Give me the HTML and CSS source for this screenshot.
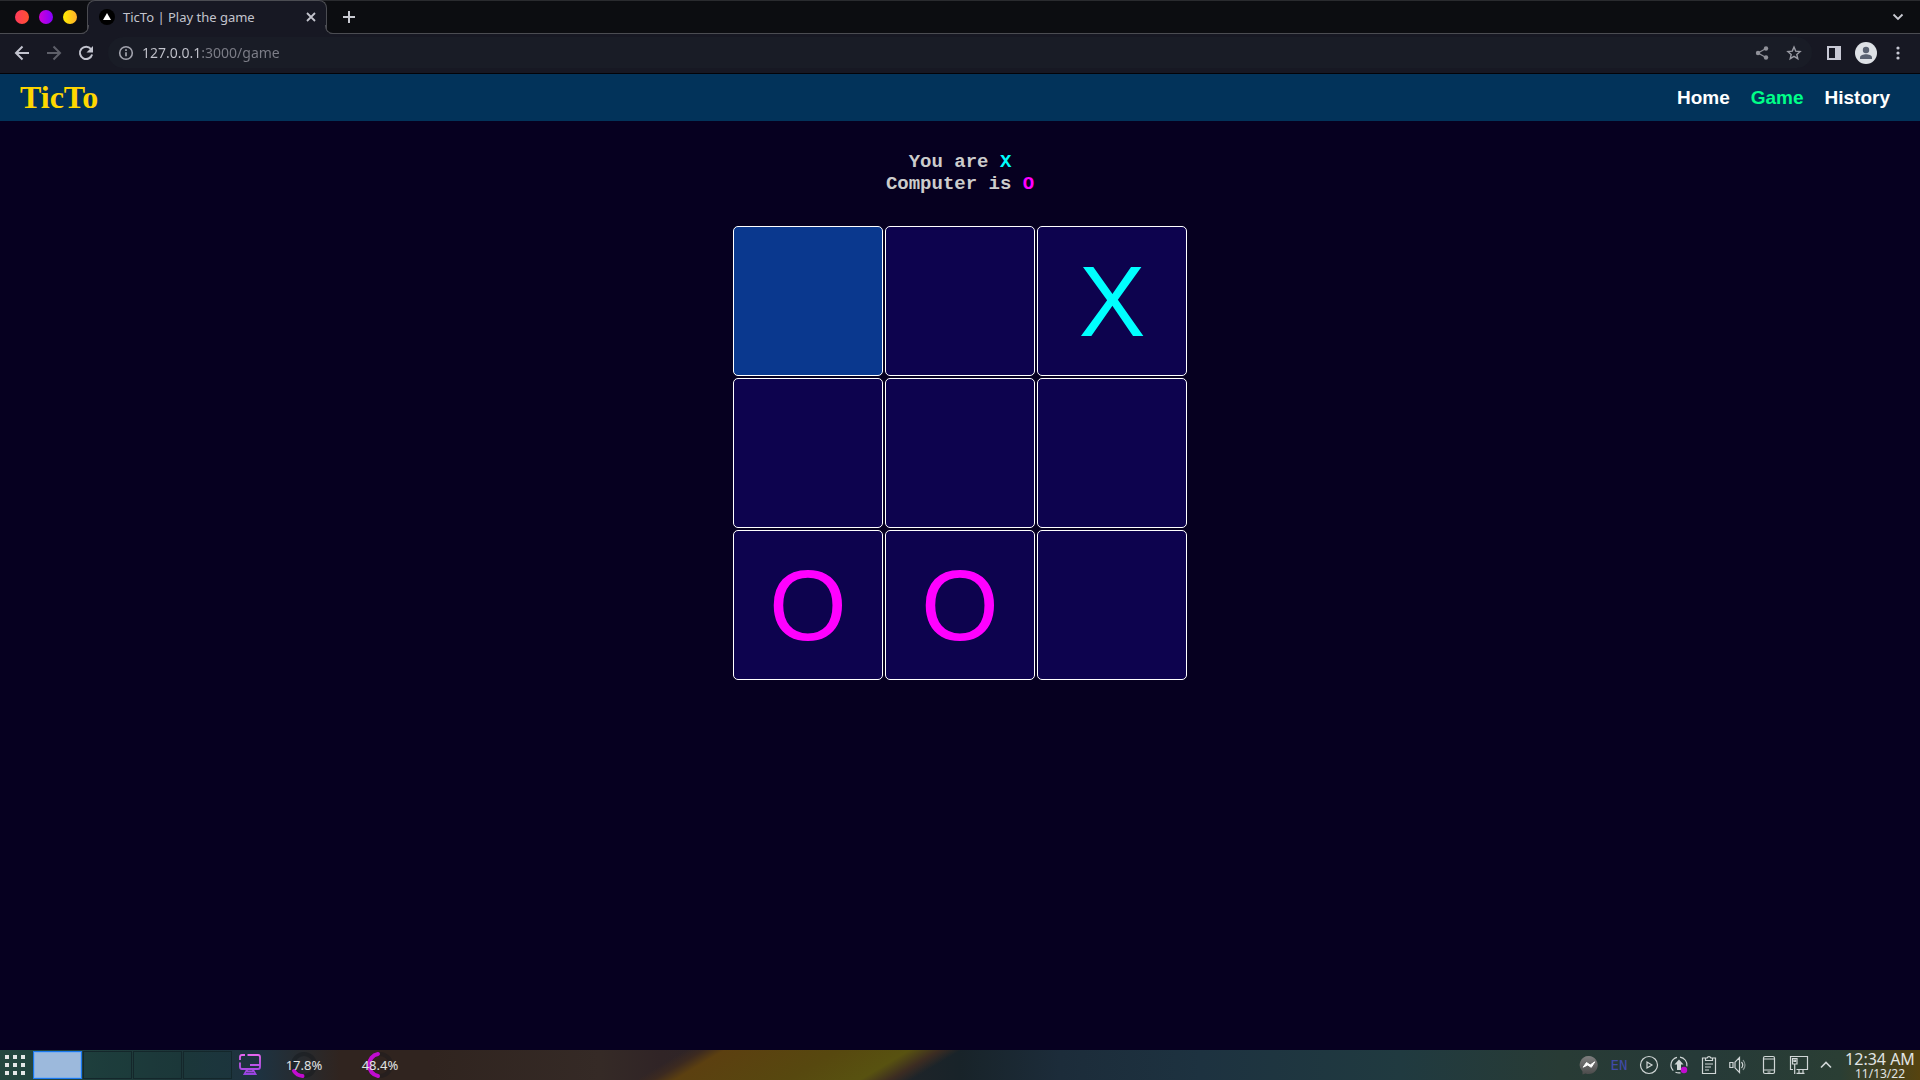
FILE: index.html
```html
<!DOCTYPE html>
<html lang="en">
<head>
<meta charset="utf-8">
<title>TicTo | Play the game</title>
<link rel="stylesheet" href="styles.css">
</head>
<body>
<header class="browser">
  <div class="strip">
    <div class="window-buttons">
      <button class="dot dot-red" aria-label="Close window"></button>
      <button class="dot dot-purple" aria-label="Minimize"></button>
      <button class="dot dot-yellow" aria-label="Maximize"></button>
    </div>
    <div class="tab">
      <svg class="favicon" width="16" height="16" viewBox="0 0 16 16"><circle cx="8" cy="8" r="8" fill="#000"/><path d="M8 4l4 7H4z" fill="#fff"/></svg>
      <span class="tab-title">TicTo | Play the game</span>
      <button class="icon" aria-label="Close tab"><svg width="16" height="16" viewBox="0 0 16 16"><path d="M4 4l8 8M12 4l-8 8" stroke="#c3c4cd" stroke-width="1.8"/></svg></button>
    </div>
    <button class="icon new-tab" aria-label="New tab"><svg width="16" height="16" viewBox="0 0 16 16"><path d="M8 2v12M2 8h12" stroke="#c9cad2" stroke-width="2"/></svg></button>
    <button class="icon tab-search" aria-label="Search tabs"><svg width="16" height="16" viewBox="0 0 16 16"><path d="M3.500 5.500l4.500 4.500 4.500-4.500" fill="none" stroke="#c9cad2" stroke-width="1.800"/></svg></button>
  </div>
  <div class="toolbar">
    <div class="history-buttons">
      <button class="icon" aria-label="Back"><svg width="16" height="16" viewBox="0 0 16 16"><path d="M15 8H2.500M8.500 1.500L2 8l6.500 6.500" fill="none" stroke="#c3c4cf" stroke-width="2"/></svg></button>
      <button class="icon" aria-label="Forward"><svg width="16" height="16" viewBox="0 0 16 16"><path d="M1 8h12.500M7.500 1.500L14 8l-6.500 6.500" fill="none" stroke="#5e5f69" stroke-width="2"/></svg></button>
      <button class="icon" aria-label="Reload"><svg width="16" height="16" viewBox="0 0 16 16"><path d="M13 4A6.200 6.200 0 1 0 14.100 9.500" fill="none" stroke="#c3c4cf" stroke-width="2"/><path d="M15 1v6.500H8.500z" fill="#c3c4cf"/></svg></button>
    </div>
    <div class="omnibox">
      <svg width="16" height="16" viewBox="0 0 16 16"><circle cx="8" cy="8" r="6.300" fill="none" stroke="#a3a4ae" stroke-width="1.600"/><path d="M8 7.200v4M8 4.300v1.600" stroke="#a3a4ae" stroke-width="1.700"/></svg>
      <input class="url" type="text" aria-label="Address" value="127.0.0.1:3000/game">
      <button class="icon" aria-label="Share"><svg width="16" height="16" viewBox="0 0 16 16"><path d="M12 3.500L4 8l8 4.500" fill="none" stroke="#8f9098" stroke-width="1.300"/><g fill="#8f9098"><circle cx="12" cy="3.500" r="2.200"/><circle cx="4" cy="8" r="2.200"/><circle cx="12" cy="12.500" r="2.200"/></g></svg></button>
      <button class="icon" aria-label="Bookmark"><svg width="16" height="16" viewBox="0 0 16 16"><path d="M8 2l1.700 4.100 4.400.4-3.300 2.900 1 4.300L8 11.400l-3.800 2.300 1-4.300L1.900 6.500l4.400-.4z" fill="none" stroke="#9a9ba4" stroke-width="1.400"/></svg></button>
    </div>
    <button class="icon" aria-label="Side panel"><svg width="16" height="16" viewBox="0 0 16 16"><path d="M1 1h14v14H1zM3 3v10h6V3z" fill="#c7c8d4" fill-rule="evenodd"/></svg></button>
    <button class="icon avatar" aria-label="Profile"><svg width="22" height="22" viewBox="0 0 22 22"><circle cx="11" cy="11" r="11" fill="#dee1e6"/><circle cx="11" cy="8" r="3.200" fill="#5a6272"/><path d="M5 17v-1.500c0-2.200 3.500-3.200 6-3.200s6 1 6 3.200V17z" fill="#5a6272"/></svg></button>
    <button class="icon" aria-label="Menu"><svg width="16" height="16" viewBox="0 0 16 16" fill="#c7c8d4"><circle cx="8" cy="3" r="1.600"/><circle cx="8" cy="8" r="1.600"/><circle cx="8" cy="13" r="1.600"/></svg></button>
  </div>
</header>

<nav class="site-nav">
  <a class="brand" href="#">TicTo</a>
  <div class="links">
    <a href="#">Home</a>
    <a class="current" href="#">Game</a>
    <a href="#">History</a>
  </div>
</nav>

<main class="game">
  <h3 class="status">You are <span class="x">X</span><br>Computer is <span class="o">O</span></h3>
  <div class="board">
    <button class="cell hovered" aria-label="Row 1, column 1"></button>
    <button class="cell" aria-label="Row 1, column 2"></button>
    <button class="cell x">X</button>
    <button class="cell" aria-label="Row 2, column 1"></button>
    <button class="cell" aria-label="Row 2, column 2"></button>
    <button class="cell" aria-label="Row 2, column 3"></button>
    <button class="cell o">O</button>
    <button class="cell o">O</button>
    <button class="cell" aria-label="Row 3, column 3"></button>
  </div>
</main>

<footer class="taskbar">
  <button class="icon launcher" aria-label="Applications"><svg width="20" height="20" viewBox="0 0 20 20" fill="#e4e7e6"><path d="M0 0h4v4H0zM8 0h4v4H8zM16 0h4v4h-4zM0 8h4v4H0zM8 8h4v4H8zM16 8h4v4h-4zM0 16h4v4H0zM8 16h4v4H8zM16 16h4v4h-4z"/></svg></button>
  <div class="pager">
    <button class="desk active" aria-label="Desktop 1"></button>
    <button class="desk" aria-label="Desktop 2"></button>
    <button class="desk" aria-label="Desktop 3"></button>
    <button class="desk" aria-label="Desktop 4"></button>
  </div>
  <button class="icon monitor" aria-label="Show desktop"><svg width="22" height="22" viewBox="0 0 22 22" fill="none" stroke-width="1.800"><defs><linearGradient id="mon" gradientUnits="userSpaceOnUse" x1="0" y1="0" x2="0" y2="22"><stop offset="0" stop-color="#e867f0"/><stop offset="1" stop-color="#9040e0"/></linearGradient></defs><g stroke="url(#mon)"><path d="M1 6V3q0-2 2-2h3M8.500 1H19q2 0 2 2v10q0 2-2 2H3q-2 0-2-2V8.500"/><path d="M11 11h10M8.500 15l-3 5h11l-3-5M8 17.500h6"/></g></svg></button>
  <div class="gauge">
    <svg width="28" height="28" viewBox="0 0 28 28" fill="none" stroke-width="4"><circle cx="14" cy="14" r="11" stroke="#15181c" stroke-opacity=".45"/><path d="M12.500 25A11 11 0 0 1 4 20" stroke="#c20cd0" stroke-linecap="round"/></svg>
    <span>17.8%</span>
  </div>
  <div class="gauge">
    <svg width="28" height="28" viewBox="0 0 28 28" fill="none" stroke-width="4"><circle cx="14" cy="14" r="11" stroke="#15181c" stroke-opacity=".35"/><path d="M12 25A11.200 11.200 0 0 1 12 3" stroke="#c20cd0" stroke-linecap="round"/></svg>
    <span>48.4%</span>
  </div>
  <div class="tray">
    <svg width="20" height="20" viewBox="0 0 20 20"><defs><linearGradient id="msg" x1="0" y1="0" x2="0" y2="1"><stop offset="0" stop-color="#7e7e7e"/><stop offset="1" stop-color="#4a4a4a"/></linearGradient></defs><path d="M10 1a9 9 0 1 1-3.500 17.400L3.500 19.500v-3A9 9 0 0 1 10 1z" fill="url(#msg)"/><path d="M4.200 12.200L7.500 7.500 11.200 10l4.600-3.200-3.500 5.500L8.700 10z" fill="#fff" stroke="#fff"/></svg>
    <span class="lang">EN</span>
    <svg width="20" height="20" viewBox="0 0 20 20" fill="none" stroke="#d0d6d6" stroke-width="1.200"><circle cx="10" cy="10" r="8.500"/><path d="M8 7v6l5-3z"/></svg>
    <svg width="20" height="20" viewBox="0 0 20 20" fill="none" stroke="#d0d6d6" stroke-width="1.200"><path d="M8 2.300A8 8 0 0 0 4.300 15.700M6.500 17.200a8 8 0 0 0 5 .6M11 2.100a8 8 0 0 1 6.900 9.200"/><path d="M10 4.500l4.500 5H12V15H8V9.500H5.500z" fill="#d0d6d6" stroke="none"/><circle cx="15" cy="15" r="3.200" fill="#c20cd0" stroke="none"/></svg>
    <svg width="20" height="20" viewBox="0 0 20 20" fill="none" stroke="#d0d6d6" stroke-width="1.200"><path d="M6 3H3.500v15.500h13V3H14M6.500 5.500h7V3h-1.600a2 2 0 0 0-3.800 0H6.500zM6 9h8M6 12h6M6 15h4"/></svg>
    <svg width="20" height="20" viewBox="0 0 20 20" fill="none" stroke="#d0d6d6" stroke-width="1.200"><path d="M.8 7.500H4v5H.8zM6 7.200l4.500-4.700v15L6 12.800zM12.500 7q2.500 3 0 6"/><path d="M14 5q4 5 0 10" stroke-opacity=".6"/></svg>
    <svg width="20" height="20" viewBox="0 0 20 20" fill="none" stroke="#d0d6d6" stroke-width="1.200"><rect x="4.500" y="1.500" width="11" height="17" rx="1.500"/><path d="M4.500 4h11M4.500 15h11M8.500 17h3"/></svg>
    <svg width="20" height="20" viewBox="0 0 20 20" fill="none" stroke="#d0d6d6" stroke-width="1.200"><path d="M4 14.500H1.500v-13h17v13H7.500M3.500 3.500H8v5.500H3.500zM5 5h1.500v1.500H5zM5.700 9v10M10 14.500v3.500M14 14.500v3.500M7.500 18.300h8"/></svg>
    <svg width="14" height="20" viewBox="0 0 14 20" fill="none" stroke="#d0d6d6" stroke-width="1.600"><path d="M2 12.500l5-5 5 5"/></svg>
  </div>
  <div class="clock"><span class="time">12:34 AM</span><span class="date">11/13/22</span></div>
</footer>
</body>
</html>
```
FILE: styles.css
```css
* { box-sizing: border-box; }

body {
  margin: 0;
  min-height: 100vh;
  display: flex;
  flex-direction: column;
  background: #060020;
  font-family: "Noto Sans", sans-serif;
}

button {
  padding: 0;
  border: 0;
  background: none;
  font: inherit;
  color: inherit;
}

a { text-decoration: none; color: inherit; }
svg { display: block; flex: none; }

.icon {
  display: flex;
  align-items: center;
  justify-content: center;
  flex: none;
  min-width: 16px;
}

/* Browser window */
.browser { color: #c3c4cd; border-bottom: 1px solid #030308; }

.strip {
  display: flex;
  align-items: center;
  height: 34px;
  background: #0c0d11;
  border-top: 1px solid #2a2b2f;
  border-bottom: 1px solid #4b4c52;
}

.window-buttons { display: flex; gap: 10px; padding: 0 10px 0 15px; }
.dot { width: 14px; height: 14px; border-radius: 50%; }
.dot-red { background: linear-gradient(90deg, #ff3a5c, #ff5130); }
.dot-purple { background: linear-gradient(90deg, #d000d8, #8400ff); }
.dot-yellow { background: linear-gradient(90deg, #ffee00, #ffae2c); }

.tab {
  position: relative;
  display: flex;
  align-items: center;
  gap: 8px;
  width: 240px;
  height: 34px;
  padding: 0 7px 1px 11px;
  background: #171823;
  border: 1px solid #4b4c52;
  border-bottom: 0;
  border-radius: 8px 8px 0 0;
}
.tab::before,
.tab::after {
  content: "";
  position: absolute;
  bottom: 0;
  width: 8px;
  height: 8px;
  border-bottom: 1px solid #4b4c52;
}
.tab::before { left: -8px; border-right: 1px solid #4b4c52; border-radius: 0 0 8px 0; box-shadow: 2px 2px 0 #171823; clip-path: inset(0 -1px 0 0); }
.tab::after { right: -8px; border-left: 1px solid #4b4c52; border-radius: 0 0 0 8px; box-shadow: -2px 2px 0 #171823; clip-path: inset(0 0 0 -1px); }
.tab-title { flex: 1; font-size: 13px; line-height: 18px; }
.new-tab { margin-left: 14px; }
.tab-search { margin-left: auto; margin-right: 14px; }

.toolbar {
  display: flex;
  align-items: center;
  height: 39px;
  padding: 0 14px 2px;
  background: #171823;
}
.history-buttons { display: flex; gap: 16px; margin-right: 14px; }
.omnibox {
  flex: 1;
  display: flex;
  align-items: center;
  gap: 8px;
  height: 31px;
  padding: 0 10px;
  margin-right: 14px;
  border-radius: 16px;
  background: #191c26;
}
.omnibox .icon + .icon { margin-left: 8px; }
.url {
  flex: 1;
  min-width: 0;
  padding: 0;
  border: 0;
  font: 14px/20px "Noto Sans", sans-serif;
  color: transparent;
  background: linear-gradient(90deg, #c3c4cd 60px, #7d7e88 60px);
  background-clip: text;
}
.avatar { margin: 0 13px; }

/* Site */
.site-nav {
  display: flex;
  align-items: center;
  justify-content: space-between;
  height: 47px;
  padding: 0 30px 0 20px;
  background: #02335a;
}
.brand { font: bold 32px/36px "Liberation Serif", serif; color: #ffd700; padding-bottom: 2px; }
.links {
  display: flex;
  gap: 21px;
  font: bold 19px/22px "Liberation Sans", sans-serif;
  color: #fff;
}
.links .current { color: #00ff88; }

.game {
  flex: 1;
  display: flex;
  flex-direction: column;
  align-items: center;
  gap: 31px;
  padding: 30px 0;
}
.status {
  margin: 0;
  text-align: center;
  font: bold 19px/22px "Liberation Mono", monospace;
  color: #ccc;
}
.x { color: #0ff; }
.o { color: #f0f; }

.board {
  display: grid;
  grid-template-columns: repeat(3, 150px);
  grid-auto-rows: 150px;
  gap: 2px;
}
.cell {
  border: 1px solid #fff;
  border-radius: 5px;
  background: #0d034e;
  font: 100px/116px "Liberation Sans", sans-serif;
}
.cell.x { color: #0ff; }
.cell.o { color: #f0f; }
.cell.hovered { background: #0a388e; }

/* Desktop panel */
.taskbar {
  display: flex;
  align-items: center;
  height: 30px;
  padding: 0 5px;
  color: #e0e4e4;
  background:
    linear-gradient(149deg, transparent 20%, #3c2a20 24%, #5c4010 29%, #57480f 55%, #585210 72%, #3c2c22 79%, transparent 84%) 600px 0 / 380px 30px no-repeat,
    linear-gradient(90deg, #24483f 0, #1d3639 180px, #1e3240 260px, #30241f 340px, #30241f 430px, #352a26 600px, #302426 660px, #2b2629 800px, #182329 960px, #1c2c3a 1060px, #1d3240 1200px, #203a40 1400px, #283b35 1560px, #263a38 1700px, #2a3e34 1840px, #56430f 100%);
}
.launcher { margin-right: 8px; }
.pager { display: flex; gap: 1px; margin-right: 7px; }
.desk {
  width: 49px;
  height: 28px;
  border: 1px solid #14272b;
  background: rgba(20, 60, 60, 0.2);
}
.desk.active { background: #9cb9dc; border-color: #1a78ee; box-shadow: inset 0 0 0 1px #7fb0ea; }
.monitor { margin-right: 13px; }
.gauge {
  position: relative;
  display: flex;
  justify-content: center;
  width: 60px;
  margin-right: 16px;
  font-size: 13px;
  line-height: 28px;
}
.gauge span { position: absolute; inset: 0; text-align: center; }

.tray { display: flex; align-items: center; gap: 10px; margin-left: auto; }
.lang { width: 20px; text-align: center; font: 14px/20px "DejaVu Sans Mono", monospace; color: #414aa8; }
.clock { display: flex; flex-direction: column; align-items: center; width: 70px; margin-left: 12px; }
.time { font-size: 16px; line-height: 16px; white-space: nowrap; }
.date { font-size: 12px; line-height: 13px; }
```
